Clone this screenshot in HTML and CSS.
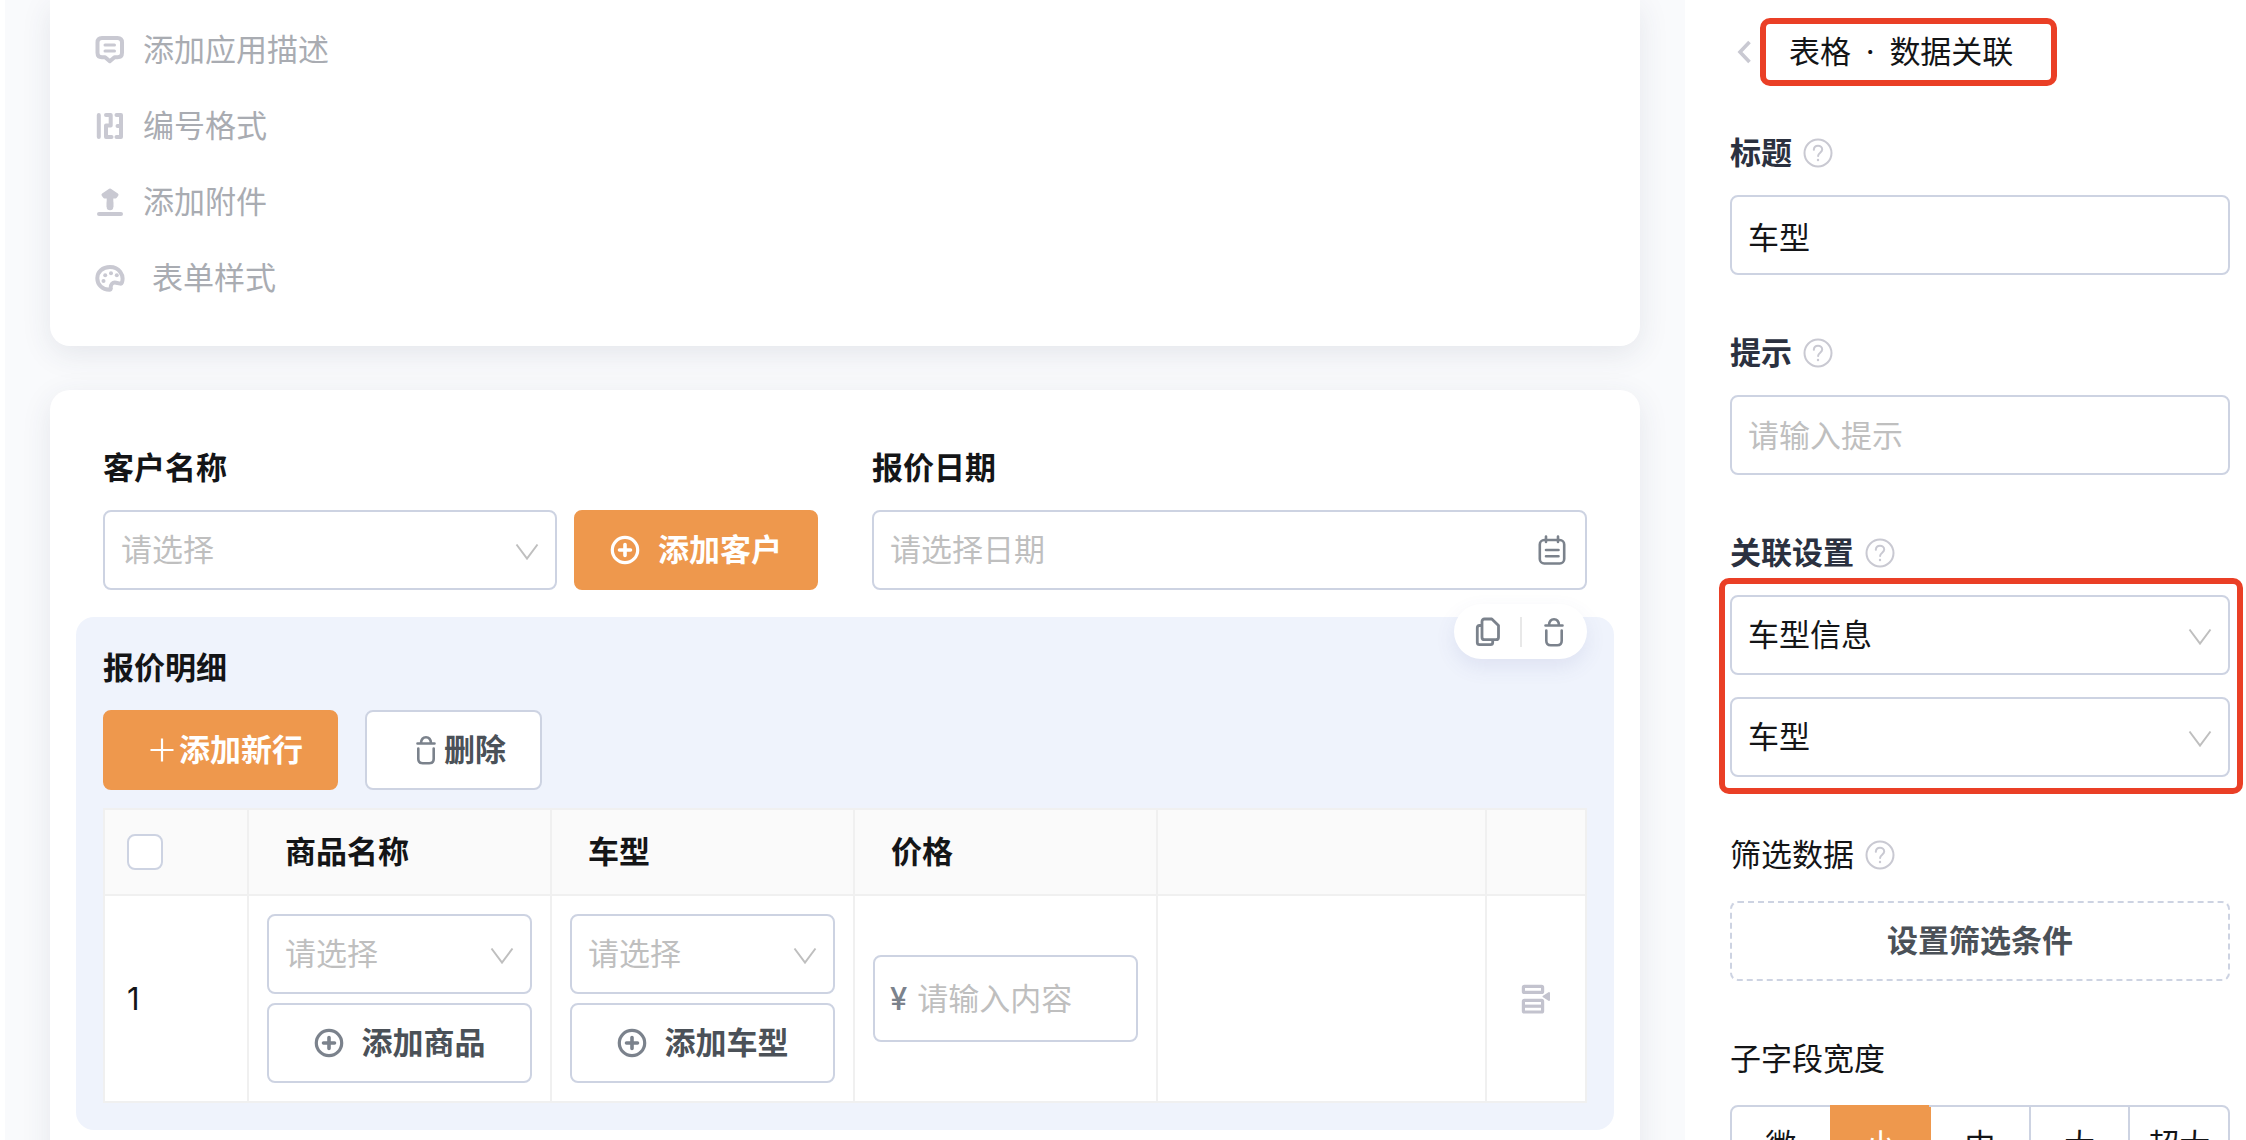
FILE: index.html
```
<!DOCTYPE html>
<html lang="zh-CN">
<head>
  <meta charset="UTF-8" />
  <meta name="viewport" content="width=device-width, initial-scale=1.0" />
  <title>表单设计</title>
  <link rel="stylesheet" href="styles.css">
</head>
<body>

  <!-- icons used more than once -->
  <svg class="sprite" aria-hidden="true">
    <symbol id="i-trash" viewBox="0 0 30 30" fill="none" stroke="currentColor" stroke-width="2.6" stroke-linecap="round" stroke-linejoin="round">
      <path d="M6.5 8.5h17M10 8c.3-3.800 2.300-5.700 5-5.700s4.700 1.900 5 5.700M7.300 13.500v10.200q0 4.500 4.500 4.500h6.400q4.500 0 4.500-4.500V13.500" />
    </symbol>
    <symbol id="i-add" viewBox="0 0 30 30" fill="none" stroke="currentColor" stroke-linecap="round">
      <circle cx="15" cy="15" r="12.700" stroke-width="3.200" />
      <path d="M9.500 15h11M15 9.500v11" stroke-width="3.600" />
    </symbol>
    <symbol id="i-help" viewBox="0 0 30 30" fill="none" stroke="currentColor" stroke-width="2" stroke-linecap="round">
      <circle cx="15" cy="15" r="13.500" />
      <path d="M10.800 11.800c.2-2.500 1.900-4 4.200-4s4.200 1.500 4.200 3.800c0 3-4.100 3.200-4.100 6.400" />
      <circle cx="15" cy="22" r="1.200" fill="currentColor" stroke="none" />
    </symbol>
  </svg>

  <main class="canvas">
    <section class="card card-top">
      <ul class="options">
        <li>
          <svg class="icon" viewBox="0 0 30 30" fill="none" stroke="currentColor" stroke-width="4" stroke-linecap="round" stroke-linejoin="round">
            <path d="M7 3h15.500q4.500 0 4.500 4.500v10.200q0 4.500-4.500 4.500h-3l-4.700 4-4.700-4H7q-4.500 0-4.500-4.500V7.500Q2.500 3 7 3Z" />
            <path d="M10 10h9.500M10 16h9.500" stroke-width="3" />
          </svg>
          添加应用描述
        </li>
        <li>
          <svg class="icon" viewBox="0 0 30 30" fill="none" stroke="currentColor" stroke-width="4" stroke-linecap="round" stroke-linejoin="round">
            <path d="M3.800 4v22M11 4h4.700v10.500H11V26h5.500M21.500 4h4.500v22h-4.500M22.500 15H26" />
          </svg>
          编号格式
        </li>
        <li>
          <svg class="icon" viewBox="0 0 30 30" fill="none" stroke="currentColor" stroke-linecap="round" stroke-linejoin="round">
            <path d="M15 5v15" stroke-width="6.600" stroke-linecap="butt" />
            <path d="M15 16v4" stroke-width="6.600" />
            <path d="M15 3L8 7.800L9.500 10h11l1.500-2.200Z" fill="currentColor" stroke-width="3" />
            <path d="M4 27h22" stroke-width="4" />
          </svg>
          添加附件
        </li>
        <li class="option-wide">
          <svg class="icon" viewBox="0 0 30 30" fill="none" stroke="currentColor" stroke-width="4" stroke-linejoin="round">
            <path d="M15 4C7.500 4 2.300 8.800 2.300 15.200c0 6.500 5 11.300 12.200 11.600.8 0 1.300-.5 1.200-1.500-.2-4 1.800-6.300 5.300-5.600l4.300.9c.8.2 1.300 0 1.600-.9C29.500 12 24 4 15 4Z" />
            <g fill="currentColor" stroke="none">
              <circle cx="8.500" cy="18" r="2" /><circle cx="10.200" cy="12.300" r="2" /><circle cx="16" cy="10.200" r="2" /><circle cx="21.800" cy="12.300" r="2" />
            </g>
          </svg>
          表单样式
        </li>
      </ul>
    </section>

    <section class="card card-form">
      <div class="form-row">
        <div class="form-item">
          <label for="customer">客户名称</label>
          <div class="control-group">
            <select id="customer" class="control placeholder">
              <option>请选择</option>
            </select>
            <button type="button" class="btn btn-primary btn-add">
              <svg class="icon"><use href="#i-add" /></svg>添加客户
            </button>
          </div>
        </div>
        <div class="form-item">
          <label for="quoteDate">报价日期</label>
          <div class="control input-wrap">
            <input id="quoteDate" type="text" placeholder="请选择日期" />
            <svg class="icon icon-dark" viewBox="0 0 30 30" fill="none" stroke="currentColor" stroke-width="2.600" stroke-linecap="round" stroke-linejoin="round">
              <rect x="2.800" y="5" width="24.400" height="23.500" rx="4.500" />
              <path d="M9 1.500v5.500M21 1.500v5.500M9 15h12.500M9 21.300h12.500" />
            </svg>
          </div>
        </div>
      </div>

      <div class="detail">
        <div class="detail-tools">
          <button type="button" aria-label="复制">
            <svg class="icon" viewBox="0 0 30 30" fill="none" stroke="currentColor" stroke-width="2.800" stroke-linecap="round" stroke-linejoin="round">
              <path d="M11.500 2h7.300l6.700 6.500v11.700q0 2.500-2.500 2.500H11.500Q9 22.700 9 20.200V4.500Q9 2 11.500 2ZM8 8.500H6.500q-2.200 0-2.200 2.200v14.800q0 2.200 2.200 2.200h11q2.200 0 2.200-2.200V24" />
            </svg>
          </button>
          <button type="button" aria-label="删除">
            <svg class="icon"><use href="#i-trash" /></svg>
          </button>
        </div>

        <h2>报价明细</h2>
        <div class="detail-actions">
          <button type="button" class="btn btn-primary btn-row">
            <svg class="icon" viewBox="0 0 30 30" fill="none" stroke="currentColor" stroke-width="2.200"><path d="M3.500 15h23M15 3.500v23" /></svg>添加新行
          </button>
          <button type="button" class="btn btn-delete">
            <svg class="icon"><use href="#i-trash" /></svg>删除
          </button>
        </div>

        <table>
          <colgroup>
            <col class="col-check"><col class="col-field"><col class="col-field"><col class="col-field"><col><col class="col-action">
          </colgroup>
          <thead>
            <tr>
              <th><input type="checkbox" aria-label="全选" /></th>
              <th class="th-field">商品名称</th>
              <th class="th-field">车型</th>
              <th class="th-field">价格</th>
              <th></th>
              <th></th>
            </tr>
          </thead>
          <tbody>
            <tr>
              <td class="td-index">1</td>
              <td>
                <div class="cell-stack">
                  <select class="control placeholder" aria-label="商品名称">
                    <option>请选择</option>
                  </select>
                  <button type="button" class="btn btn-add"><svg class="icon"><use href="#i-add" /></svg>添加商品</button>
                </div>
              </td>
              <td>
                <div class="cell-stack">
                  <select class="control placeholder" aria-label="车型">
                    <option>请选择</option>
                  </select>
                  <button type="button" class="btn btn-add"><svg class="icon"><use href="#i-add" /></svg>添加车型</button>
                </div>
              </td>
              <td>
                <div class="control input-wrap price">
                  <span>¥</span>
                  <input type="text" placeholder="请输入内容" aria-label="价格" />
                </div>
              </td>
              <td></td>
              <td class="td-action">
                <button type="button" aria-label="插入行">
                  <svg class="icon" viewBox="0 0 30 30" fill="none" stroke="currentColor" stroke-width="3.200" stroke-linejoin="round">
                    <rect x="2.400" y="2.400" width="19.200" height="6" rx="1" />
                    <rect x="2.400" y="16.400" width="19.200" height="11.600" rx="1" />
                    <path d="M2.400 22.200h19.200" />
                    <path d="M22.500 12.500l5.500-3.500v7Z" fill="currentColor" stroke-width="2" />
                  </svg>
                </button>
              </td>
            </tr>
          </tbody>
        </table>
      </div>
    </section>
  </main>

  <aside class="panel">
    <header class="panel-head">
      <button type="button" class="back" aria-label="返回">
        <svg viewBox="0 0 14 24" fill="none" stroke="currentColor" stroke-width="3.600"><path d="M12.500 2L3 12l9.500 10" /></svg>
      </button>
      <h1 class="mark">表格<span class="dot"> · </span>数据关联</h1>
    </header>

    <div class="field">
      <div class="field-label"><label for="title">标题</label><svg class="icon"><use href="#i-help" /></svg></div>
      <input id="title" class="control" type="text" value="车型" />
    </div>

    <div class="field">
      <div class="field-label"><label for="tip">提示</label><svg class="icon"><use href="#i-help" /></svg></div>
      <input id="tip" class="control" type="text" placeholder="请输入提示" />
    </div>

    <div class="field">
      <div class="field-label"><label for="relForm">关联设置</label><svg class="icon"><use href="#i-help" /></svg></div>
      <div class="mark relation">
        <select id="relForm" class="control">
          <option>车型信息</option>
        </select>
        <select class="control" aria-label="关联字段">
          <option>车型</option>
        </select>
      </div>
    </div>

    <div class="field field-plain">
      <div class="field-label"><span>筛选数据</span><svg class="icon"><use href="#i-help" /></svg></div>
      <button type="button" class="btn btn-dashed">设置筛选条件</button>
    </div>

    <div class="field field-plain">
      <div class="field-label"><span id="widthLabel">子字段宽度</span></div>
      <div class="segmented" role="radiogroup" aria-labelledby="widthLabel">
        <label><input type="radio" name="width" value="xs" />微</label>
        <label><input type="radio" name="width" value="s" checked />小</label>
        <label><input type="radio" name="width" value="m" />中</label>
        <label><input type="radio" name="width" value="l" />大</label>
        <label><input type="radio" name="width" value="xl" />超大</label>
      </div>
    </div>
  </aside>

</body>
</html>
```

FILE: styles.css
```
* { box-sizing: border-box; }
body {
  display: flex;
  height: 100vh;
  margin: 0;
  overflow: hidden;
  background: #fff;
  color: #141517;
  font: 31px/40px Inter, "Noto Sans CJK SC", sans-serif;
}
input, select, button { font: inherit; color: inherit; }
button { padding: 0; border: none; background: none; cursor: pointer; }
h1, h2 { margin: 0; font-size: inherit; font-weight: 600; }
.sprite { position: absolute; width: 0; height: 0; }
.icon { display: block; flex: none; width: 30px; height: 30px; }
.icon-dark { color: #7b828c; }

/* controls */
.control {
  display: block;
  width: 100%;
  height: 80px;
  padding: 0 16px;
  border: 2px solid #cdd3e2;
  border-radius: 8px;
  background: #fff;
  outline: none;
}
select.control {
  appearance: none;
  background: #fff url("data:image/svg+xml,%3Csvg xmlns='http://www.w3.org/2000/svg' width='24' height='18' fill='none' stroke='%23bfbfbf' stroke-width='2'%3E%3Cpath d='M1.500 1.500L12 15.500L22.500 1.500'/%3E%3C/svg%3E") no-repeat right 16px top 31px;
}
.placeholder { color: #bfbfbf; }
::placeholder { color: #bfbfbf; opacity: 1; }
.input-wrap { display: flex; align-items: center; gap: 10px; padding-right: 18px; }
.input-wrap input { flex: 1; min-width: 0; padding: 0; border: none; outline: none; background: none; }

.btn {
  display: flex;
  align-items: center;
  justify-content: center;
  height: 80px;
  border: 2px solid #cdd3e2;
  border-radius: 8px;
  background: #fff;
  color: #4b5158;
  font-weight: 600;
}
.btn .icon { color: #7b828c; }
.btn-add { gap: 18px; }
.btn-row { gap: 2px; padding: 0 33px 0 42px; }
.btn-delete { gap: 3px; padding: 0 34px 0 44px; }
.btn-primary { border-color: #ee984d; background: #ee984d; color: #fff; }
.btn-primary .icon { color: #fff; }
.btn-dashed { width: 100%; border-style: dashed; }

/* form canvas */
.canvas { flex: 1; min-width: 0; margin-left: 5px; padding: 0 45px; background: #f9fafc; }
.card { background: #fff; box-shadow: 0 8px 30px rgba(50, 56, 90, 0.1); }
.card-top { padding: 30px 45px 48px; border-radius: 0 0 20px 20px; }
.card-form { height: 100%; margin-top: 44px; padding: 54px 26px 0; border-radius: 20px; }
.options { display: flex; flex-direction: column; gap: 36px; margin: 0; padding: 0; list-style: none; }
.options li { display: flex; align-items: center; gap: 18px; color: #a9acb2; }
.options .icon { color: #c9c9d2; }
.options .option-wide { gap: 27px; }

.form-row { display: grid; grid-template-columns: 1fr 1fr; gap: 54px; padding: 0 27px; }
.form-item label, .detail h2 { display: block; margin-bottom: 18px; font-weight: 600; line-height: 48px; }
.control-group { display: flex; gap: 17px; }
.control-group .control { flex: 1; }
.control-group .btn { padding: 0 34px; }

.detail { position: relative; margin-top: 27px; padding: 27px; border-radius: 18px; background: #eff3fc; }
.detail-actions { display: flex; gap: 27px; margin-bottom: 18px; }
.detail-tools {
  position: absolute;
  top: -13px;
  right: 27px;
  display: flex;
  align-items: center;
  height: 55px;
  border-radius: 28px;
  background: #fff;
  color: #7b828c;
  box-shadow: 0 8px 20px rgba(80, 90, 160, 0.1);
}
.detail-tools button { padding: 0 17px 0 19px; }
.detail-tools button + button { padding: 0 18px 0 17px; border-left: 2px solid #e8e8e8; }

table { width: 100%; table-layout: fixed; border-collapse: collapse; background: #fff; }
th, td { padding: 0 18px; border: 2px solid #f0f0f0; text-align: left; }
th { height: 86px; background: #fafafa; font-weight: 600; }
td { height: 207px; }
th:first-child, .td-index { padding-left: 22px; }
.th-field { padding-left: 36px; }
.col-check { width: 144px; }
.col-field { width: 303px; }
.col-action { width: 100px; }
.cell-stack { display: flex; flex-direction: column; gap: 9px; }
.price { height: 87px; padding-left: 15px; }
.price span { color: #7b828c; font-weight: 500; }
.td-action button { display: block; margin: 0 auto; color: #c3c3ce; }
input[type="checkbox"] {
  display: block;
  appearance: none;
  width: 36px;
  height: 36px;
  margin: 0;
  border: 2px solid #cdd3e2;
  border-radius: 8px;
  background: #fff;
}

/* settings panel */
.panel { width: 561px; padding: 18px 16px 0 45px; }
.panel-head { display: flex; align-items: center; gap: 9px; padding-left: 7px; }
.back svg { display: block; width: 14px; height: 24px; color: #c9c9d2; }
.mark { border: 6px solid #ea3f26; border-radius: 10px; }
h1.mark { padding: 8px 38px 8px 23px; font-weight: 400; }
.dot { margin: 0 6px; white-space: pre; }
.field { margin-top: 58px; }
.panel-head + .field { margin-top: 47px; }
.field-label { display: flex; align-items: center; gap: 11px; margin-bottom: 22px; color: #2b3140; font-weight: 600; }
.field-label .icon { color: #c9c9d2; }
.relation { display: flex; flex-direction: column; gap: 22px; margin: -17px -13px -17px -11px; padding: 11px 7px 11px 5px; }
.field-plain .field-label { margin-bottom: 26px; color: #141517; font-weight: 400; }

.segmented { display: flex; border: 2px solid #cdd3e2; border-radius: 8px; }
.segmented label { position: relative; flex: 1; border-left: 2px solid #cdd3e2; line-height: 76px; text-align: center; }
.segmented label:first-child { border-left: none; }
.segmented input { position: absolute; opacity: 0; }
.segmented label:has(:checked) { margin: -2px 0; padding: 2px 0; border-color: #ee984d; background: #ee984d; color: #fff; }
.segmented label:has(:checked) + label { border-color: #ee984d; }
```
